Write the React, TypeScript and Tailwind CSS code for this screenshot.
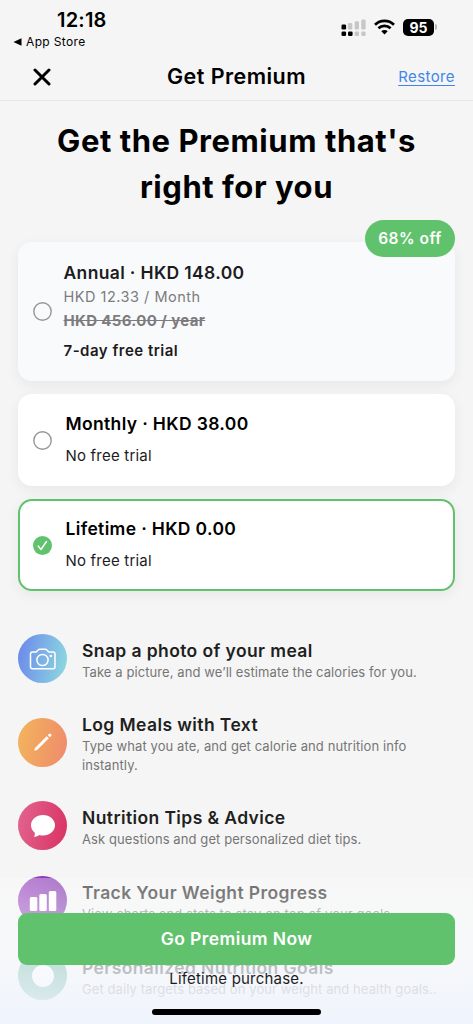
import type { ReactNode } from "react";

function StatusBar() {
  return (
    <div className="flex h-[54px] justify-between pl-[13px] pr-[36px]">
      <div className="pt-[9px]">
        <div className="pl-[44px] text-[20px] font-semibold leading-[23px] tracking-[0.2px]">12:18</div>
        <div className="flex items-center gap-[4px] pt-[1px] text-[12px] leading-[17px] tracking-[0.35px]">
          <svg width="9" height="8" viewBox="0 0 9 8"><path d="M0.5 4 8.5 0.3v7.4z" fill="#000" /></svg>
          App Store
        </div>
      </div>
      <div className="mt-[18px] flex h-[18px] items-center gap-[8px]">
        <svg width="25" height="18" viewBox="0 0 25 18">
          <g fill="#000">
            <rect x="0.5" y="6.5" width="4.6" height="5" rx="1.3" />
            <rect x="0.5" y="13.5" width="4.6" height="4.5" rx="1.3" />
            <rect x="7" y="13.5" width="4.6" height="4.5" rx="1.3" />
          </g>
          <g fill="#c7c7c7">
            <rect x="7" y="5" width="4.3" height="6.5" rx="1.2" />
            <rect x="13.7" y="3.3" width="4.3" height="8.2" rx="1.2" />
            <rect x="20.3" y="1.5" width="4.3" height="10" rx="1.2" />
            <rect x="13.7" y="13.5" width="4.3" height="4.5" rx="1.2" />
            <rect x="20.3" y="13.5" width="4.3" height="4.5" rx="1.2" />
          </g>
        </svg>
        <svg width="21" height="16" viewBox="0 0 21 16" fill="none" stroke="#000" strokeWidth="2.7">
          <path d="M1 5.7a13.6 13.6 0 0 1 19 0" />
          <path d="M4.4 9.3a8.7 8.7 0 0 1 12.2 0" />
          <path d="M10.5 15.6 7.3 12.3a4.6 4.6 0 0 1 6.4 0z" fill="#000" stroke="none" />
        </svg>
        <div className="flex items-center gap-[1px]">
          <div className="flex h-[17px] w-[31px] items-center justify-center rounded-[5px] bg-black text-[14px] font-bold text-white">95</div>
          <div className="h-[6px] w-[2px] rounded-r-full bg-[#b5b5b5]" />
        </div>
      </div>
    </div>
  );
}

function NavBar() {
  return (
    <div className="grid h-[47px] grid-cols-[1fr_auto_1fr] items-center border-b border-[#e6e6e6] px-[18px]">
      <svg className="ml-[15px]" width="18" height="18" viewBox="0 0 18 18" stroke="#000" strokeWidth="3" strokeLinecap="round">
        <path d="M2 2l14 14M16 2 2 16" />
      </svg>
      <div className="pb-[2px] text-[21.5px] font-semibold leading-[28px] tracking-[0.45px]">Get Premium</div>
      <a className="justify-self-end text-[15px] leading-[20px] tracking-[0.4px] text-[#4285e8] underline underline-offset-[3px]">Restore</a>
    </div>
  );
}

function Radio({ checked = false }: { checked?: boolean }) {
  return (
    <svg className="shrink-0" width="19" height="19" viewBox="0 0 19 19" fill="none">
      {checked ? (
        <>
          <circle cx="9.5" cy="9.5" r="9.5" fill="#61c26d" />
          <path d="M5.2 10l2.8 3.5 5.5-8" stroke="#fff" strokeWidth="1.4" strokeLinecap="round" strokeLinejoin="round" />
        </>
      ) : (
        <circle cx="9.5" cy="9.5" r="8.7" stroke="#969698" strokeWidth="1.4" />
      )}
    </svg>
  );
}

function SimplePlan({ title, selected = false }: { title: string; selected?: boolean }) {
  return (
    <div
      className={
        "flex h-[92px] items-center gap-[13.5px] rounded-[14px] border-2 bg-white pl-[13px] shadow-[0_4px_14px_rgba(0,0,0,0.06)] " +
        (selected ? "border-[#61c26d]" : "border-white")
      }
    >
      <Radio checked={selected} />
      <div className="pb-[2px]">
        <div className="text-[17.5px] font-semibold leading-[24px] tracking-[0.35px]">{title}</div>
        <div className="pt-[9px] text-[15px] leading-[21px] tracking-[0.2px] text-[#1c1c1e]">No free trial</div>
      </div>
    </div>
  );
}

function Feature({ gradient, icon, title, children }: { gradient: string; icon: ReactNode; title: string; children: ReactNode }) {
  return (
    <div className="flex items-center gap-[15px]">
      <div className={"flex size-[49px] shrink-0 items-center justify-center rounded-full bg-linear-[100deg] " + gradient}>{icon}</div>
      <div className="whitespace-nowrap pt-[4px]">
        <div className="text-[17.5px] font-semibold leading-[24px] tracking-[0.4px] text-[#1f1f21]">{title}</div>
        <div className="text-[13px] leading-[19px] tracking-[0.09px] text-[#757575]">{children}</div>
      </div>
    </div>
  );
}

export default function App() {
  return (
    <div className="relative h-[1024px] w-[473px] overflow-hidden bg-[#f5f5f5] font-['Inter',sans-serif] text-black">
      <StatusBar />
      <NavBar />
      <h1 className="pt-[17px] text-center text-[31px] font-bold leading-[46px] tracking-[0.55px]">
        Get the Premium that's
        <br />
        right for you
      </h1>

      <div className="flex flex-col gap-[13px] px-[18px] pt-[32px]">
        <div className="relative flex h-[139px] items-center gap-[11.5px] rounded-[14px] bg-[#f9fafc] pl-[15px] shadow-[0_4px_14px_rgba(0,0,0,0.06)]">
          <Radio />
          <div className="text-[#1c1c1e]">
            <div className="text-[17.5px] font-semibold leading-[24px] tracking-[0.35px]">Annual · HKD 148.00</div>
            <div className="text-[14.5px] leading-[24px] tracking-[0.5px] text-[#7c7c7e]">HKD 12.33 / Month</div>
            <div className="text-[15px] font-bold leading-[23px] tracking-[0.35px] text-[#7c7c7e] line-through">HKD 456.00 / year</div>
            <div className="pt-[8px] text-[15px] font-semibold leading-[22px] tracking-[0.5px]">7-day free trial</div>
          </div>
          <div className="absolute -top-[22px] right-0 flex h-[37px] w-[90px] items-center justify-center rounded-full bg-[#61c26d] text-[15.5px] font-semibold tracking-[0.5px] text-white">
            68% off
          </div>
        </div>
        <SimplePlan title="Monthly · HKD 38.00" />
        <SimplePlan title="Lifetime · HKD 0.00" selected />
      </div>

      <div className="flex flex-col gap-[26px] px-[18px] pt-[43px]">
        <Feature
          gradient="from-[#6a86ec] to-[#8fdcdf]"
          title="Snap a photo of your meal"
          icon={
            <svg width="28" height="24" viewBox="0 0 28 24" fill="none" stroke="#fff" strokeWidth="1.5" strokeLinejoin="round">
              <path d="M3.500 5.100H7.200L9.400 2.800c.3-.4.700-.6 1.200-.6h5.800c.5 0 .9.200 1.200.6l2.200 2.300h4.200c1.200 0 2 .9 2 2V19.800c0 1.200-.8 2-2 2H3.500c-1.200 0-2-.8-2-2V7.100c0-1.100.8-2 2-2z" />
              <circle cx="13.500" cy="13" r="5.600" />
              <circle cx="21.800" cy="9" r="1.300" fill="#fff" stroke="none" />
            </svg>
          }
        >
          Take a picture, and we’ll estimate the calories for you.
        </Feature>
        <Feature
          gradient="from-[#f3b55c] to-[#ee8a6c]"
          title="Log Meals with Text"
          icon={
            <svg width="20" height="20" viewBox="0 0 20 20" fill="#fff">
              <path d="M1.200 18.800 2 15.900 13.700 4.200l2.100 2.100L4.100 18z" />
              <path d="M14.700 3.200 16 1.900a1.500 1.500 0 0 1 2.100 2.100l-1.300 1.300z" />
            </svg>
          }
        >
          Type what you ate, and get calorie and nutrition info
          <br />
          instantly.
        </Feature>
        <Feature
          gradient="from-[#e26590] to-[#d93262]"
          title="Nutrition Tips & Advice"
          icon={
            <svg width="26" height="24" viewBox="0 0 26 24" fill="#fff">
              <path d="M13 1C6.300 1 1 5.600 1 11.300c0 3 1.500 5.600 3.800 7.500.2 1.600-.1 2.900-1 4 2.300-.1 4.200-.8 5.600-1.900 1.200.4 2.300.6 3.600.6 6.700 0 12-4.500 12-10.200S19.700 1 13 1z" />
            </svg>
          }
        >
          Ask questions and get personalized diet tips.
        </Feature>
        <Feature
          gradient="from-[#9a42c0] to-[#7d30ac]"
          title="Track Your Weight Progress"
          icon={
            <svg width="28" height="20" viewBox="0 0 28 20" fill="#fff">
              <rect x="0.800" y="6" width="7.500" height="14" rx="1.500" />
              <rect x="10.300" y="3" width="7.500" height="17" rx="1.500" />
              <rect x="19.800" y="0" width="7.500" height="20" rx="1.500" />
            </svg>
          }
        >
          View charts and stats to stay on top of your goals.
        </Feature>
        <Feature
          gradient="from-[#5cb09a] to-[#4aa08c]"
          title="Personalized Nutrition Goals"
          icon={<span className="size-[22px] rounded-full bg-white" />}
        >
          Get daily targets based on your weight and health goals..
        </Feature>
      </div>

      <div className="absolute inset-x-0 bottom-0 flex h-[146px] flex-col items-center bg-linear-to-b from-[#fcfcfc]/35 via-[#f8fafc]/65 to-[#eff4fd]/95 px-[18px] pt-[35px]">
        <button className="h-[52px] w-full rounded-[9px] bg-[#61c26d] pt-[1px] text-[17.5px] font-semibold tracking-[0.4px] text-white">
          Go Premium Now
        </button>
        <div className="pt-[3px] text-[15px] leading-[22px] tracking-[0.2px] text-[#1c1c1e]">Lifetime purchase.</div>
        <div className="mt-[19px] h-[6px] w-[169px] rounded-full bg-black" />
      </div>
    </div>
  );
}
